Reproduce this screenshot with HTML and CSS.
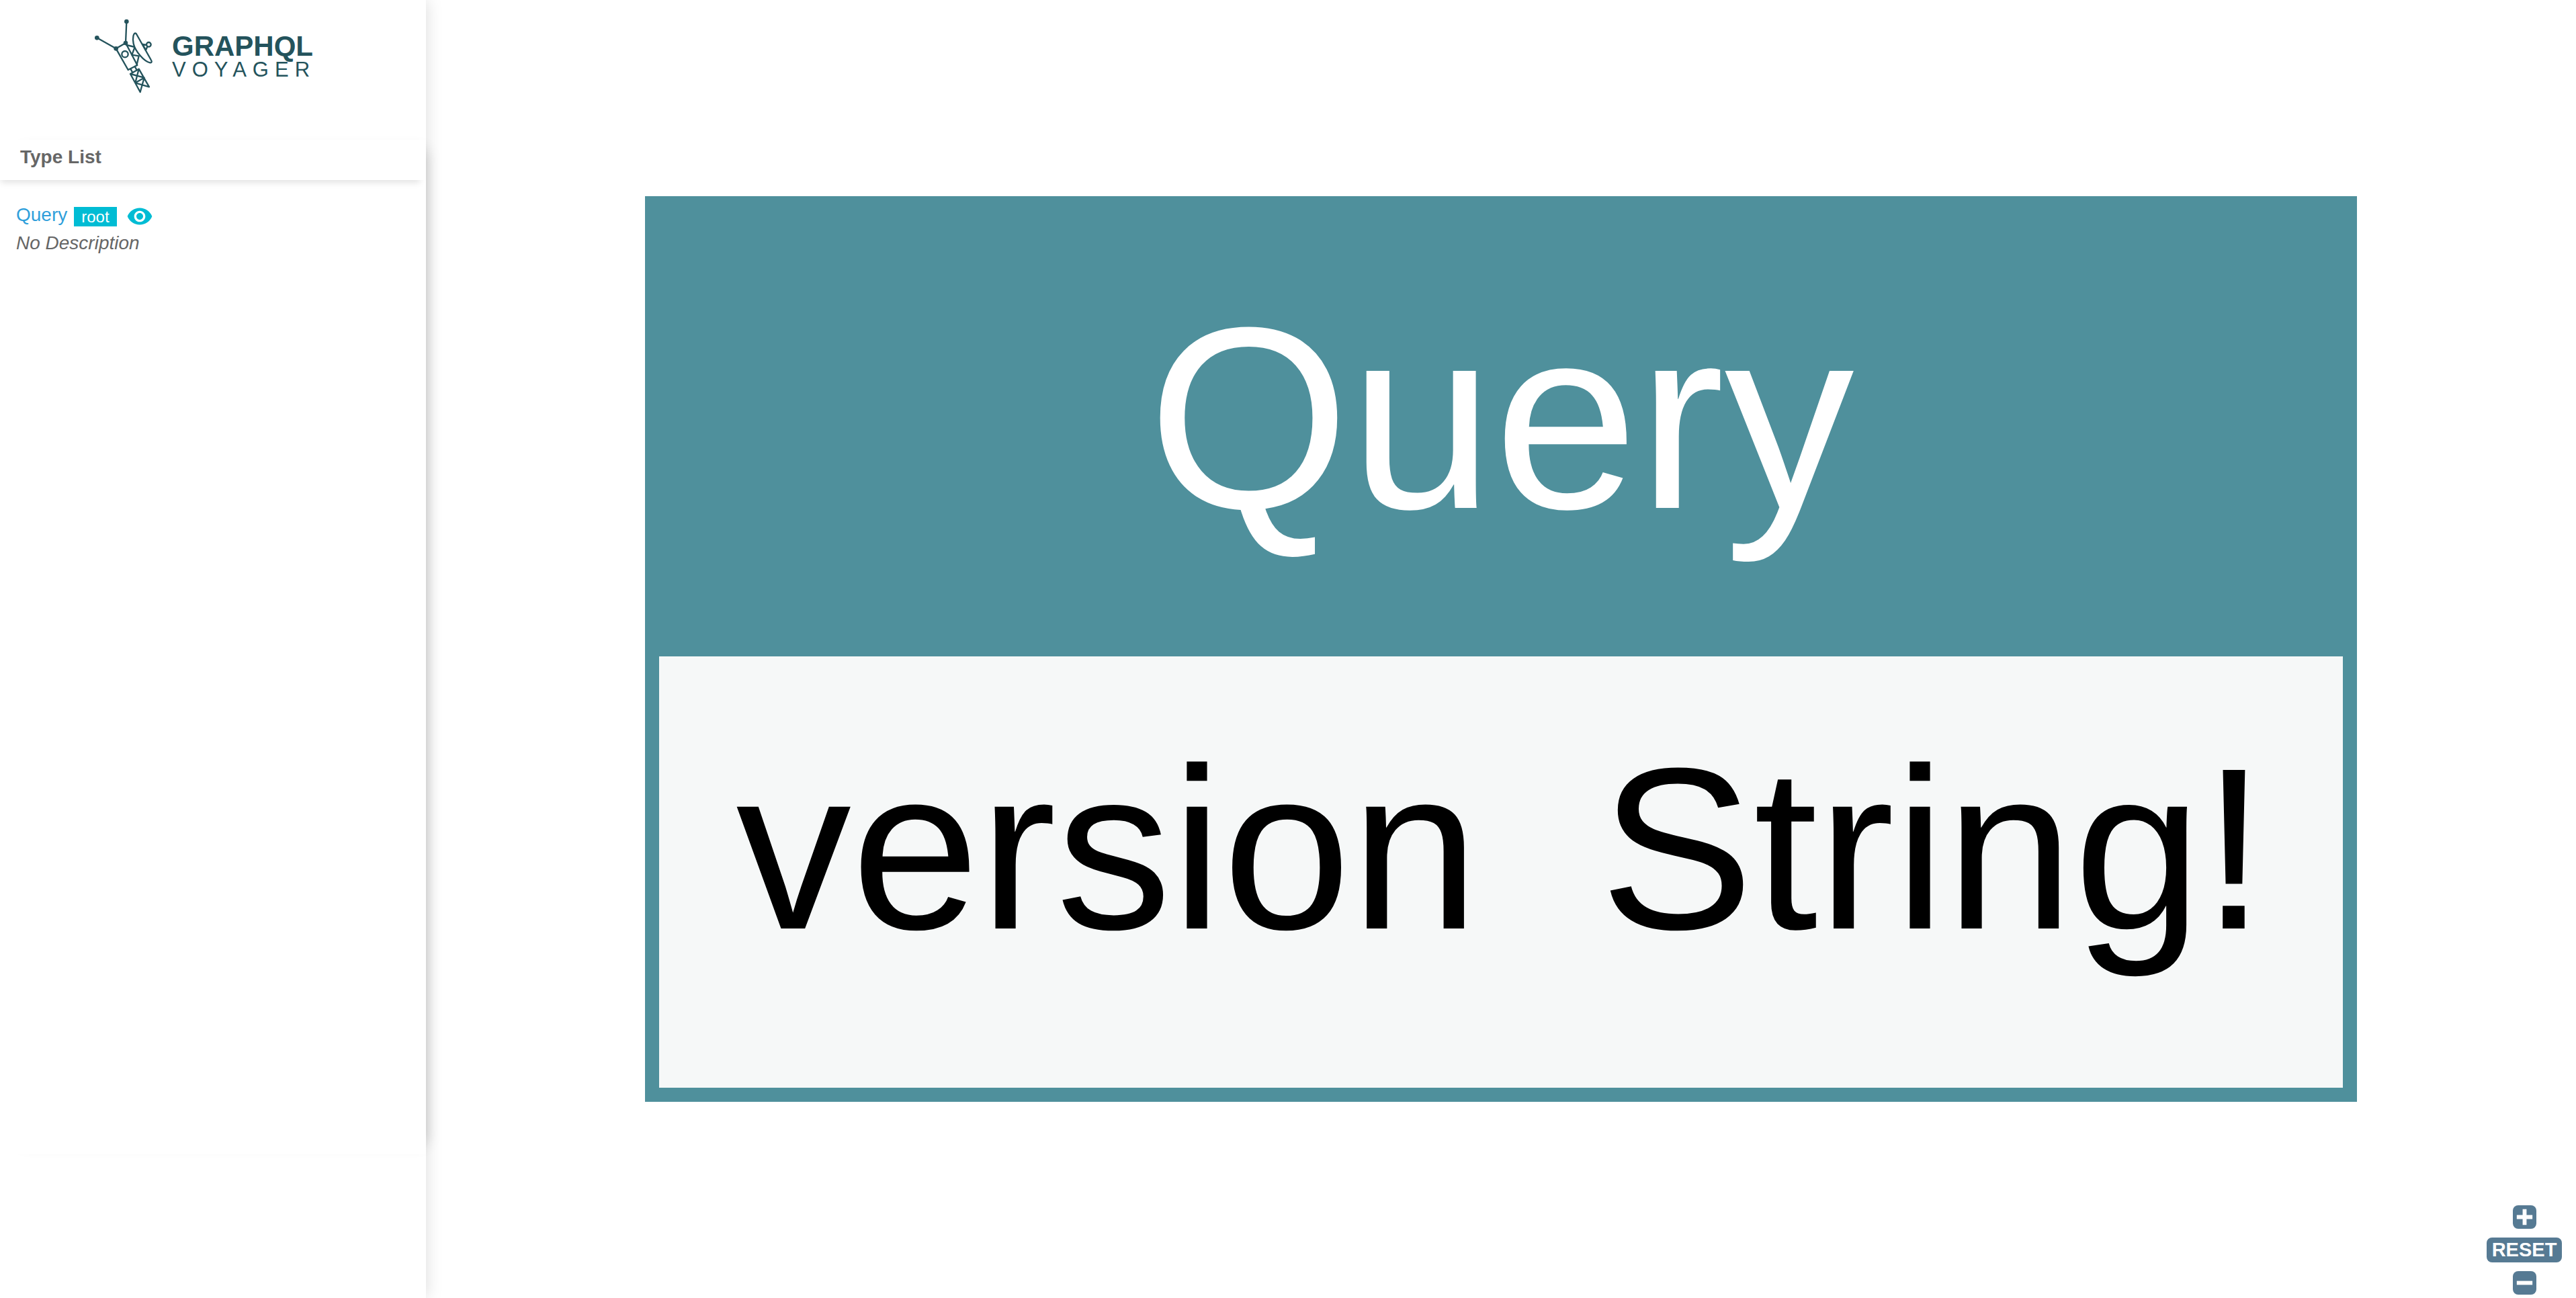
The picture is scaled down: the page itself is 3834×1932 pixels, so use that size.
FILE: index.html
```html
<!DOCTYPE html>
<html lang="en">
<head>
<meta charset="utf-8">
<meta name="viewport" content="width=device-width, initial-scale=1">
<title>GraphQL Voyager</title>
<link rel="stylesheet" href="styles.css">
</head>
<body>
<div class="voyager">
  <aside class="sidebar">
    <a class="logo" href="#">
      <svg class="logo-mark" viewBox="0 0 330 375" aria-hidden="true">
        <g fill="none" stroke="currentColor" stroke-width="7" stroke-linejoin="round" stroke-linecap="round">
          <path d="M43 109 128 157M175 36 171 132"/>
          <path d="M128 157 182 252 223 231 171 132Z"/>
          <circle cx="168" cy="182" r="14"/>
          <path d="M175 141 212 150 199 185 230 190 221 228"/>
          <path fill="#fff" d="M218 90C205 82 201 112 206 135C214 170 255 216 280 220C288 221 289 215 284 207Z"/>
          <circle cx="274" cy="139" r="10"/>
          <path d="M247 138 264 141M247 138 261 164 268 148"/>
          <path d="M193 248 202 264M212 237 221 253"/>
          <path d="M236 351 192 270 230 248 276 328 214 310 254 287 236 351M192 270 254 287M230 248 214 310"/>
        </g>
        <g fill="currentColor">
          <circle cx="43" cy="109" r="10"/>
          <circle cx="175" cy="36" r="10"/>
          <circle cx="128" cy="157" r="10"/>
          <circle cx="171" cy="132" r="10"/>
        </g>
      </svg>
      <span class="logo-text">
        <strong class="logo-name">GRAPHQL</strong>
        <span class="logo-sub">VOYAGER</span>
      </span>
    </a>
    <section class="doc-panel">
      <h1 class="doc-title">Type List</h1>
      <div class="type-list">
        <div class="type-head">
          <a class="type-link" href="#">Query</a>
          <span class="badge">root</span>
          <button class="focus-button" type="button" aria-label="Focus Query">
            <svg viewBox="0 0 24 24" aria-hidden="true"><path fill="currentColor" d="M12 4.500C7 4.500 2.730 7.610 1 12c1.730 4.390 6 7.500 11 7.500s9.270-3.110 11-7.500c-1.730-4.390-6-7.500-11-7.500zM12 17c-2.760 0-5-2.240-5-5s2.240-5 5-5 5 2.240 5 5-2.240 5-5 5zm0-8c-1.660 0-3 1.340-3 3s1.340 3 3 3 3-1.340 3-3-1.340-3-3-3z"/></svg>
          </button>
        </div>
        <p class="type-description">No Description</p>
      </div>
    </section>
  </aside>
  <main class="viewport">
    <table class="node">
      <thead>
        <tr><th class="node-title" colspan="2">Query</th></tr>
      </thead>
      <tbody>
        <tr><td class="field-name">version</td><td class="field-type">String!</td></tr>
      </tbody>
    </table>
    <div class="zoom-controls">
      <button class="zoom-button" type="button" aria-label="Zoom in">
        <svg viewBox="0 0 36 36" aria-hidden="true"><path d="M18 6v24M6 18h24"/></svg>
      </button>
      <button class="reset-button" type="button">RESET</button>
      <button class="zoom-button" type="button" aria-label="Zoom out">
        <svg viewBox="0 0 36 36" aria-hidden="true"><path d="M6 18h24"/></svg>
      </button>
    </div>
  </main>
</div>
</body>
</html>
```
FILE: styles.css
```css
* {
  box-sizing: border-box;
}

body {
  margin: 0;
  background: #fff;
  color: #666;
  font-family: "Liberation Sans", Arial, sans-serif;
  font-size: 28px;
}

button {
  padding: 0;
  border: 0;
  font: inherit;
  cursor: pointer;
}

a {
  text-decoration: none;
}

.voyager {
  display: flex;
  min-height: 100vh;
}

/* Sidebar */
.sidebar {
  position: relative;
  z-index: 1;
  display: flex;
  flex: 0 0 634px;
  flex-direction: column;
  padding-bottom: 214px;
  background: #fff;
  box-shadow: 0 0 24px rgba(0, 0, 0, 0.15);
}

.logo {
  display: flex;
  gap: 16px;
  height: 208px;
  padding: 20px 0 0 130px;
  color: #24535c;
}

.logo-mark {
  width: 110px;
  height: 125px;
}

.logo-text {
  display: flex;
  flex-direction: column;
  padding-top: 31px;
}

.logo-name {
  font-size: 42px;
  line-height: 35px;
}

.logo-sub {
  font-size: 31px;
  line-height: 35px;
  letter-spacing: 9px;
}

.doc-panel {
  flex: 1;
  background: #fff;
  box-shadow: 16px 0 20px -16px rgba(0, 0, 0, 0.2);
}

.doc-title {
  margin: 0;
  padding: 0 30px 8px;
  font-size: 28px;
  line-height: 52px;
  box-shadow: -4px 8px 10px -5px rgba(0, 0, 0, 0.13);
}

.type-list {
  padding: 34px 24px;
}

.type-head {
  display: flex;
  align-items: center;
  height: 40px;
}

.type-link {
  padding-bottom: 5px;
  color: #2f9fdb;
}

.badge {
  margin: 0 14px 0 10px;
  padding: 0 11px;
  background: #00bcd4;
  color: #fff;
  font-size: 24px;
  line-height: 29px;
}

.focus-button {
  width: 40px;
  height: 40px;
  background: none;
  color: #00bcd4;
}

.focus-button svg,
.zoom-button svg {
  display: block;
  width: 100%;
  height: 100%;
}

.type-description {
  margin: 0;
  font-style: italic;
  line-height: 40px;
}

/* Graph */
.viewport {
  position: relative;
  display: flex;
  flex: 1;
  align-items: center;
  justify-content: center;
}

.node {
  border: 21px solid #4f909c;
  border-spacing: 0;
  background: #f6f8f8;
}

.node-title {
  padding: 0 0 44px;
  background: #4f909c;
  color: #fff;
  font-size: 386px;
  font-weight: 400;
  line-height: 620px;
}

.field-name,
.field-type {
  color: #000;
  font-size: 343px;
  line-height: 572px;
}

.field-name {
  padding: 0 90px 70px 114px;
}

.field-type {
  padding: 0 114px 70px 90px;
}

/* Zoom controls float over the graph */
.zoom-controls {
  position: absolute;
  right: 21px;
  bottom: 5px;
  display: flex;
  flex-direction: column;
  align-items: center;
  gap: 13px;
}

.zoom-button,
.reset-button {
  border-radius: 8px;
  background: #567a93;
  color: #fff;
}

.zoom-button {
  width: 35px;
  height: 35px;
}

.zoom-button path {
  stroke: #fff;
  stroke-width: 6;
}

.reset-button {
  width: 112px;
  height: 37px;
  font-size: 29px;
  font-weight: 700;
  line-height: 37px;
}
```
